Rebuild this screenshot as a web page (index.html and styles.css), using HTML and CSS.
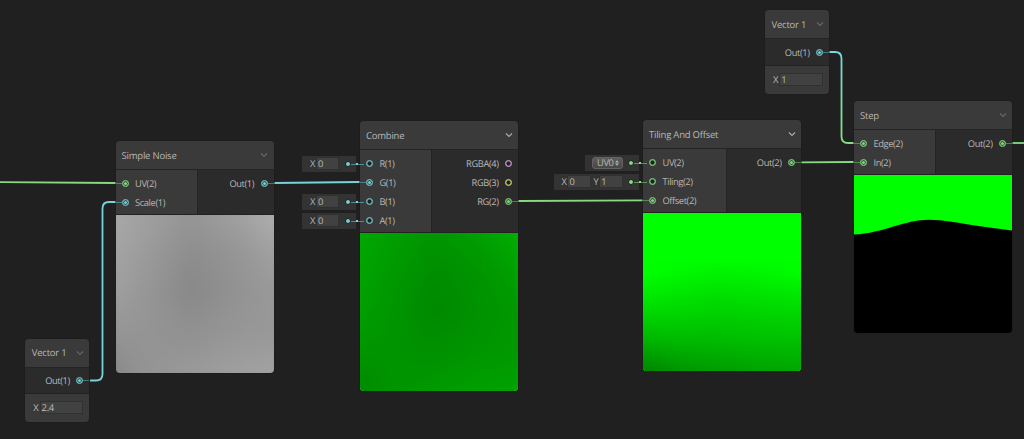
FILE: index.html
```html
<!DOCTYPE html>
<html lang="en">
<head>
<meta charset="utf-8">
<title>Shader Graph</title>
<link rel="stylesheet" href="styles.css">
</head>
<body>
<main class="graph">
  <svg class="wires" viewBox="0 0 1024 439">
    <defs>
      <linearGradient id="mix" gradientUnits="userSpaceOnUse" x1="0" y1="52" x2="0" y2="143"><stop offset="0" stop-color="#76d9dc"/><stop offset="1" stop-color="#86dc86"/></linearGradient>
    </defs>
    <path class="wire green" d="M0 182.2L116 183"/>
    <path class="wire cyan" d="M90 380.5H96Q102.5 380.5 102.5 374V208.500Q102.500 202 109 202H116"/>
    <path class="wire cyan" d="M274 183L360 182"/>
    <path class="wire green" d="M518 201L643 200.300"/>
    <path class="wire green" d="M801 162.300L854 162"/>
    <path class="wire mixed" d="M829 52H835Q841.500 52 841.500 58.500V136.500Q841.500 143 848 143H854"/>
    <path class="wire green" d="M1012 143H1024"/>
  </svg>

  <section class="node small vector-a">
    <header class="head"><span>Vector 1</span><svg class="chev dim" viewBox="0 0 8 6"><path d="M1 1.500L4 4.500L7 1.500"/></svg></header>
    <div class="ports"><div class="outs"><div class="port cyan on">Out(1)<i class="pin"></i></div></div></div>
    <div class="control"><span>X</span><b class="field">2.4</b></div>
  </section>

  <section class="node noise">
    <header class="head"><span>Simple Noise</span><svg class="chev dim" viewBox="0 0 8 6"><path d="M1 1.500L4 4.500L7 1.500"/></svg></header>
    <div class="ports">
      <div class="ins"><div class="port green on"><i class="pin"></i>UV(2)</div><div class="port cyan on"><i class="pin"></i>Scale(1)</div></div>
      <div class="outs"><div class="port cyan on">Out(1)<i class="pin"></i></div></div>
    </div>
    <div class="preview"><div class="bands clouds"><i></i><i></i><i></i><i></i></div></div>
  </section>

  <section class="node combine">
    <header class="head"><span>Combine</span><svg class="chev" viewBox="0 0 8 6"><path d="M1 1.500L4 4.500L7 1.500"/></svg></header>
    <div class="ports">
      <div class="ins">
        <div class="port cyan"><i class="pin"></i>R(1)<div class="slot"><span>X</span><b class="field">0</b><i class="plug"></i></div></div>
        <div class="port cyan on"><i class="pin"></i>G(1)</div>
        <div class="port cyan"><i class="pin"></i>B(1)<div class="slot"><span>X</span><b class="field">0</b><i class="plug"></i></div></div>
        <div class="port cyan"><i class="pin"></i>A(1)<div class="slot"><span>X</span><b class="field">0</b><i class="plug"></i></div></div>
      </div>
      <div class="outs"><div class="port pink">RGBA(4)<i class="pin"></i></div><div class="port yellow">RGB(3)<i class="pin"></i></div><div class="port green on">RG(2)<i class="pin"></i></div></div>
    </div>
    <div class="preview tinted"><div class="bands clouds"><i></i><i></i><i></i><i></i></div></div>
  </section>

  <section class="node tiling">
    <header class="head"><span>Tiling And Offset</span><svg class="chev" viewBox="0 0 8 6"><path d="M1 1.500L4 4.500L7 1.500"/></svg></header>
    <div class="ports">
      <div class="ins">
        <div class="port green"><i class="pin"></i>UV(2)<div class="slot"><b class="select">UV0<svg viewBox="0 0 4 6"><path d="M0 2.500L2 .3L4 2.500zM0 3.500L2 5.700L4 3.500z"/></svg></b><i class="plug"></i></div></div>
        <div class="port green"><i class="pin"></i>Tiling(2)<div class="slot wide"><span>X</span><b class="field">0</b><span class="second">Y</span><b class="field">1</b><i class="plug"></i></div></div>
        <div class="port green on"><i class="pin"></i>Offset(2)</div>
      </div>
      <div class="outs"><div class="port green on">Out(2)<i class="pin"></i></div></div>
    </div>
    <div class="preview"><div class="bands ramp"><i></i><i></i><i></i><i></i><i></i></div></div>
  </section>

  <section class="node small vector-b">
    <header class="head"><span>Vector 1</span><svg class="chev dim" viewBox="0 0 8 6"><path d="M1 1.500L4 4.500L7 1.500"/></svg></header>
    <div class="ports"><div class="outs"><div class="port cyan on">Out(1)<i class="pin"></i></div></div></div>
    <div class="control"><span>X</span><b class="field">1</b></div>
  </section>

  <section class="node step">
    <header class="head"><span>Step</span><svg class="chev dim" viewBox="0 0 8 6"><path d="M1 1.500L4 4.500L7 1.500"/></svg></header>
    <div class="ports">
      <div class="ins"><div class="port green on"><i class="pin"></i>Edge(2)</div><div class="port green on"><i class="pin"></i>In(2)</div></div>
      <div class="outs"><div class="port green on">Out(2)<i class="pin"></i></div></div>
    </div>
    <div class="preview black"><svg viewBox="0 0 158 158"><path d="M0 0H158V55.500C145 54 132 52 121 50.500C104 48 90 44.700 75 44.700C50 44.700 30 58 0 59.500Z" fill="#0f0"/></svg></div>
  </section>
</main>
</body>
</html>
```
FILE: styles.css
```css
* { box-sizing: border-box; }
body { margin: 0; background: #202020; }
.graph {
  position: relative;
  width: 1024px;
  height: 439px;
  overflow: hidden;
  background: #202020;
  color: #b8b8b8;
  font: 9.5px/19px "Open Sans", "Noto Sans", sans-serif;
  text-rendering: geometricPrecision;
}
.wires { position: absolute; inset: 0; width: 1024px; height: 439px; }
.wire { fill: none; stroke-width: 1.8; }
.wire.green { stroke: #84dc80; }
.wire.cyan { stroke: #76d4d8; }
.wire.mixed { stroke: url(#mix); }

/* Nodes on the free canvas */
.node { position: absolute; width: 158px; border-radius: 4px; background: #2b2b2b; box-shadow: 0 0 0 .5px #1a1a1a; }
.small { width: 64px; }
.vector-a { left: 25.3px; top: 338.500px; }
.noise { left: 115.600px; top: 141px; }
.combine { left: 360px; top: 121px; }
.tiling { left: 643px; top: 120px; }
.vector-b { left: 765px; top: 10px; }
.step { left: 854px; top: 101px; }

.head {
  display: flex;
  align-items: center;
  justify-content: space-between;
  height: 29px;
  padding: 0 5.500px 0 6px;
  border-bottom: 1px solid #242424;
  border-radius: 4px 4px 0 0;
  background: #3a3a3a;
  letter-spacing: -.22px;
}
.chev { width: 8px; height: 6px; fill: none; stroke: #aaa; stroke-width: 1.2; }
.chev.dim { stroke: #666; }

.ports { display: flex; border-bottom: 1px solid #222; }
.ins { width: 82px; padding: 3.500px 0 2.500px; border-right: 1px solid #242424; background: #3a3a3a; }
.combine .ins { width: 72px; }
.tiling .ins { width: 83.500px; }
.outs { flex: 1; padding: 3.500px 0 2.500px; background: #2b2b2b; }
.small .outs { padding-bottom: 3px; }
.small .head { padding-left: 6.500px; }
.port { position: relative; display: flex; align-items: center; gap: 6.500px; height: 19px; padding-left: 6px; font-size: 9.3px; letter-spacing: -.4px; }
.outs .port { justify-content: flex-end; padding: 0 6px 0 0; }

.cyan { --c: #76d0d4; }
.green { --c: #84dc84; }
.pink { --c: #d8a2d8; }
.yellow { --c: #dcdc78; }
.pin { position: relative; flex: none; width: 7px; height: 7px; border: 1px solid var(--c); border-radius: 50%; background: #202020; box-shadow: inset 0 0 0 .3px var(--c); }
.on .pin::before { content: ""; position: absolute; inset: 1px; border-radius: 50%; background: var(--c); }
.on .pin::after { content: ""; position: absolute; top: 2px; right: 6px; width: 6px; height: 1px; background: var(--c); opacity: .45; }
.outs .on .pin::after { right: auto; left: 6px; }

.control { display: flex; align-items: center; gap: 1px; height: 28px; padding: 0 6px 1px 8px; border-radius: 0 0 4px 4px; background: #3a3a3a; letter-spacing: -.3px; }
.field { height: 13px; flex: 1; padding-left: 1px; border: 1px solid #303030; background: #414141; font-weight: 400; line-height: 11px; }

/* Inline default values, hanging off an unconnected input */
.slot { position: absolute; right: calc(100% + 4px); top: 2.500px; display: flex; align-items: center; width: 54px; height: 15.500px; padding-left: 8px; background: #333; line-height: 15px; }
.slot.wide { width: 85.500px; }
.slot .field { flex: none; width: 23.500px; margin-left: 1px; }
.slot .second { margin-left: 2.500px; }
.plug { position: absolute; right: 5px; top: 5px; width: 6px; height: 6px; border-radius: 50%; background: var(--c); border: 1px solid #1c1c1c; }
.plug::before { content: ""; position: absolute; left: 5px; top: 1.500px; width: 13px; height: 1px; background: var(--c); opacity: .55; }
.plug::after { content: ""; position: absolute; left: 9.500px; top: 1px; width: 2px; height: 2px; background: var(--c); }
.select { display: flex; align-items: center; gap: 2px; width: 31px; height: 12px; margin-left: -1px; padding-left: 4px; border: 1px solid #636363; border-radius: 3px; background: linear-gradient(#5d5d5d, #484848); font-weight: 400; line-height: 10px; }
.select svg { width: 4px; height: 6px; fill: #b4b4b4; }

/* Each band fades in over the one above, giving a two-way interpolated field */
.preview { display: grid; height: 158px; overflow: hidden; border-radius: 0 0 4px 4px; }
.bands { grid-area: 1 / 1; display: grid; height: 158px; }
.bands i {
  grid-area: 1 / 1;
  background: linear-gradient(90deg, var(--s));
  -webkit-mask-image: linear-gradient(transparent var(--from), #000 var(--to));
  mask-image: linear-gradient(transparent var(--from), #000 var(--to));
}
.clouds { transform: scale(1.16); filter: blur(6px); background: linear-gradient(90deg, #adadad, #a2a2a2 35px, #989898 75px, #a4a4a4 115px, #b8b8b8); }
.clouds i:nth-child(1) { --from: 0px; --to: 40px; --s: #a8a8a8, #9c9c9c 35px, #8e8e8e 75px, #969696 115px, #a6a6a6; }
.clouds i:nth-child(2) { --from: 40px; --to: 75px; --s: #a3a3a3, #979797 35px, #888888 75px, #929292 115px, #9b9b9b; }
.clouds i:nth-child(3) { --from: 75px; --to: 110px; --s: #969696, #959595 35px, #909090 75px, #969696 115px, #999; }
.clouds i:nth-child(4) { --from: 110px; --to: 158px; --s: #808080, #939393 35px, #9c9c9c 75px, #a2a2a2 115px, #a6a6a6; }
.tinted { isolation: isolate; }
.tinted::after { content: ""; grid-area: 1 / 1; z-index: 1; background: #0f0; mix-blend-mode: multiply; }
.ramp { background: #0f0; }
.ramp i:nth-child(1) { --from: 45px; --to: 60px; --s: #00ff00, #00f900 35px, #00f200 75px, #00f600 115px, #00fd00; }
.ramp i:nth-child(2) { --from: 60px; --to: 80px; --s: #00ed00, #00e700 35px, #00e000 75px, #00e400 115px, #00ea00; }
.ramp i:nth-child(3) { --from: 80px; --to: 105px; --s: #00d100, #00d000 35px, #00cd00 75px, #00d000 115px, #00d300; }
.ramp i:nth-child(4) { --from: 105px; --to: 130px; --s: #00b000, #00b600 35px, #00b800 75px, #00bc00 115px, #00bf00; }
.ramp i:nth-child(5) { --from: 130px; --to: 158px; --s: #008400, #009300 35px, #009c00 75px, #00a200 115px, #00a600; }
.black { background: #000; }
.black svg { display: block; width: 158px; height: 158px; }
```
